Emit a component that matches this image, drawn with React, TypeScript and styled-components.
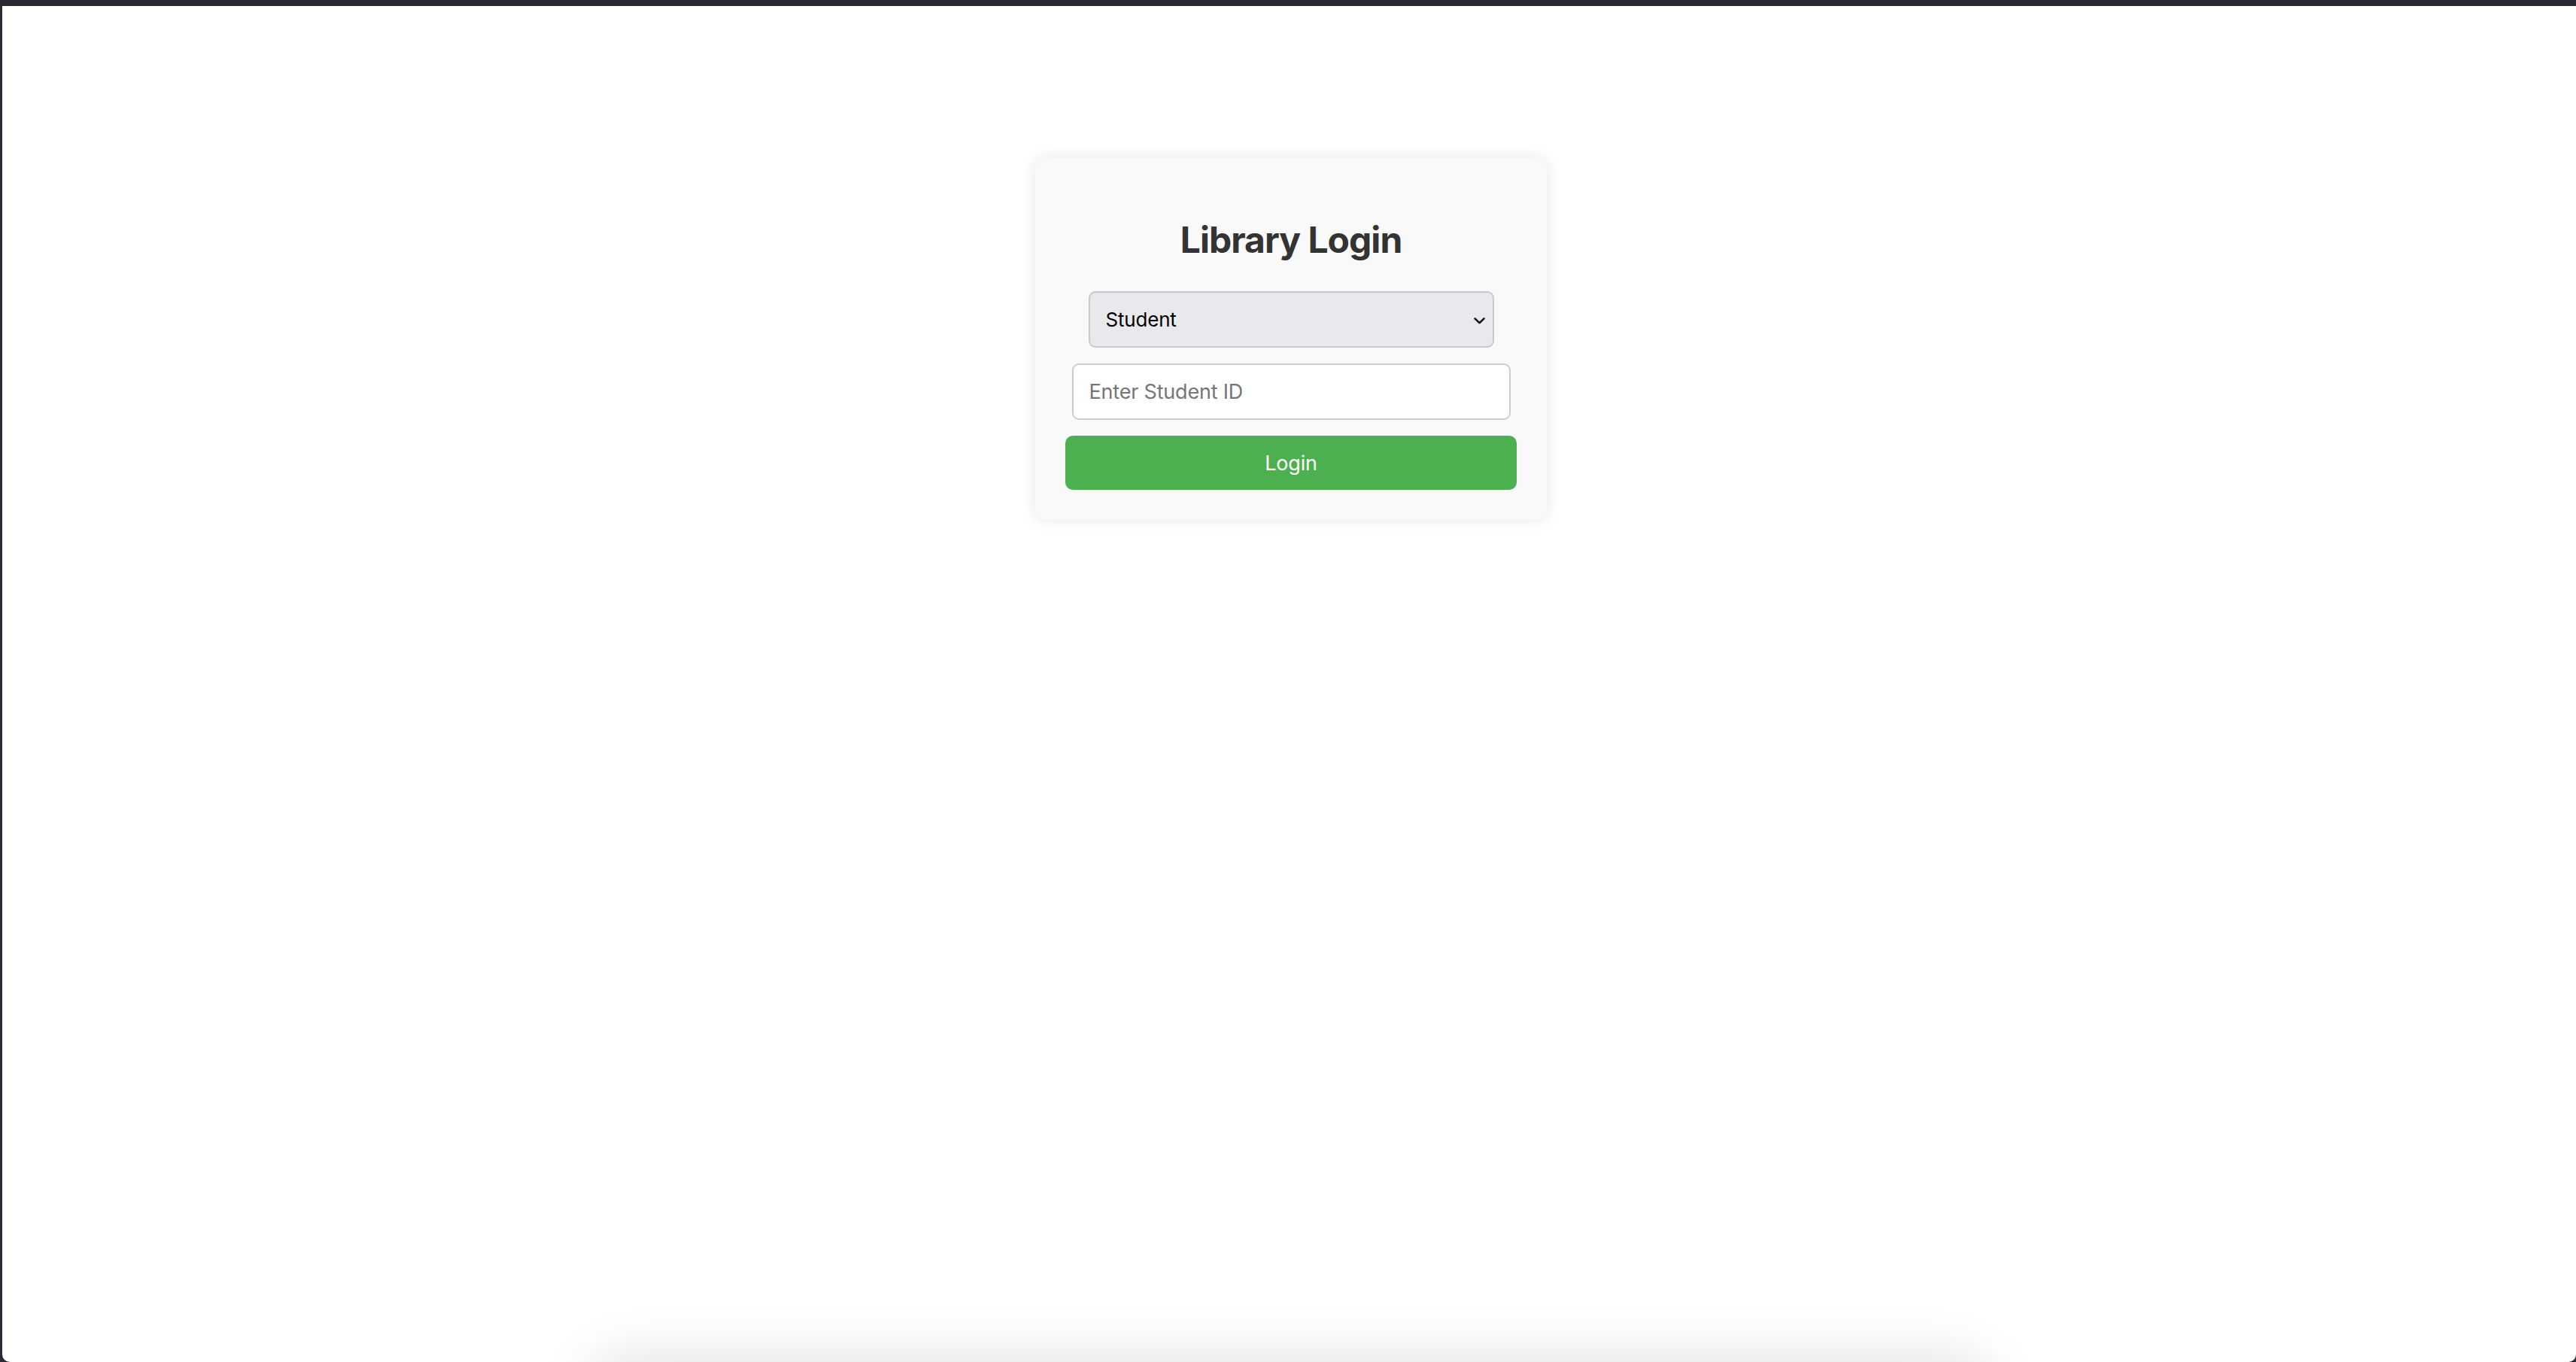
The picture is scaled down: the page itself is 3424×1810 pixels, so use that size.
import React from "react";
import styled, { createGlobalStyle } from "styled-components";

const GlobalStyle = createGlobalStyle`
  html, body {
    margin: 0;
    padding: 0;
    background: #2b2a34;
  }
  * { box-sizing: border-box; }
`;

const Screen = styled.div`
  width: 3424px;
  height: 1810px;
  padding: 8px 0 0 3px;
  background: #2b2a34;
`;

const Viewport = styled.main`
  position: relative;
  height: 100%;
  background: #ffffff;
  border-bottom-left-radius: 10px;
  border-bottom-right-radius: 10px;
  overflow: hidden;
  display: flex;
  flex-direction: column;
  align-items: center;
  padding: 201px 0 0 5px;
  font-family: Inter, "Noto Sans", sans-serif;
`;

const Card = styled.section`
  width: 680px;
  padding: 40px;
  background: #f9f9f9;
  border-radius: 16px;
  box-shadow: 0 0 20px rgba(0, 0, 0, 0.1);
  display: flex;
  flex-direction: column;
  align-items: center;
`;

const Title = styled.h2`
  margin: 41px 0 39px;
  font-size: 48px;
  line-height: 58px;
  font-weight: 700;
  color: #333333;
  letter-spacing: -1px;
`;

const Form = styled.form`
  width: 100%;
  display: flex;
  flex-direction: column;
  align-items: center;
  gap: 21px;
`;

const SelectWrap = styled.div`
  position: relative;
  width: 539px;
  height: 75px;
`;

const RoleSelect = styled.select`
  appearance: none;
  -webkit-appearance: none;
  width: 100%;
  height: 100%;
  padding: 0 48px 0 21px;
  background: #e9e9ed;
  border: 2px solid #c9c9cc;
  border-radius: 9px;
  font-family: Inter, "Noto Sans", sans-serif;
  font-size: 26px;
  color: #000000;
  letter-spacing: -0.2px;
  outline: none;
`;

const Chevron = styled.svg`
  position: absolute;
  right: 12px;
  top: 50%;
  width: 15px;
  height: 9px;
  transform: translateY(-35%);
  pointer-events: none;
`;

const IdInput = styled.input`
  width: 583px;
  height: 75px;
  padding: 0 21px;
  background: #ffffff;
  border: 2px solid #cccccc;
  border-radius: 9px;
  font-family: Inter, "Noto Sans", sans-serif;
  font-size: 27px;
  color: #222;
  letter-spacing: -0.2px;
  outline: none;
  &::placeholder {
    color: #767676;
  }
`;

const LoginButton = styled.button`
  width: 600px;
  height: 72px;
  border: none;
  border-radius: 10px;
  background: #4caf50;
  color: #ffffff;
  font-family: Inter, "Noto Sans", sans-serif;
  font-size: 27px;
  letter-spacing: -0.2px;
  cursor: pointer;
`;

const DockShadow = styled.div`
  position: absolute;
  left: 50%;
  bottom: -110px;
  width: 1860px;
  height: 110px;
  transform: translateX(-50%);
  border-radius: 60px;
  box-shadow: 0 0 70px 10px rgba(0, 0, 0, 0.11);
  pointer-events: none;
`;

export default function App() {
  return (
    <>
      <GlobalStyle />
      <Screen>
        <Viewport>
          <Card>
            <Title>Library Login</Title>
            <Form onSubmit={(e) => e.preventDefault()}>
              <SelectWrap>
                <RoleSelect defaultValue="student">
                  <option value="student">Student</option>
                  <option value="librarian">Librarian</option>
                </RoleSelect>
                <Chevron viewBox="0 0 15 9" fill="none">
                  <path
                    d="M1.5 1.5 L7.5 7.3 L13.5 1.5"
                    stroke="#111"
                    strokeWidth="2.6"
                    strokeLinecap="round"
                    strokeLinejoin="round"
                  />
                </Chevron>
              </SelectWrap>
              <IdInput type="text" placeholder="Enter Student ID" />
              <LoginButton type="submit">Login</LoginButton>
            </Form>
          </Card>
          <DockShadow />
        </Viewport>
      </Screen>
    </>
  );
}
